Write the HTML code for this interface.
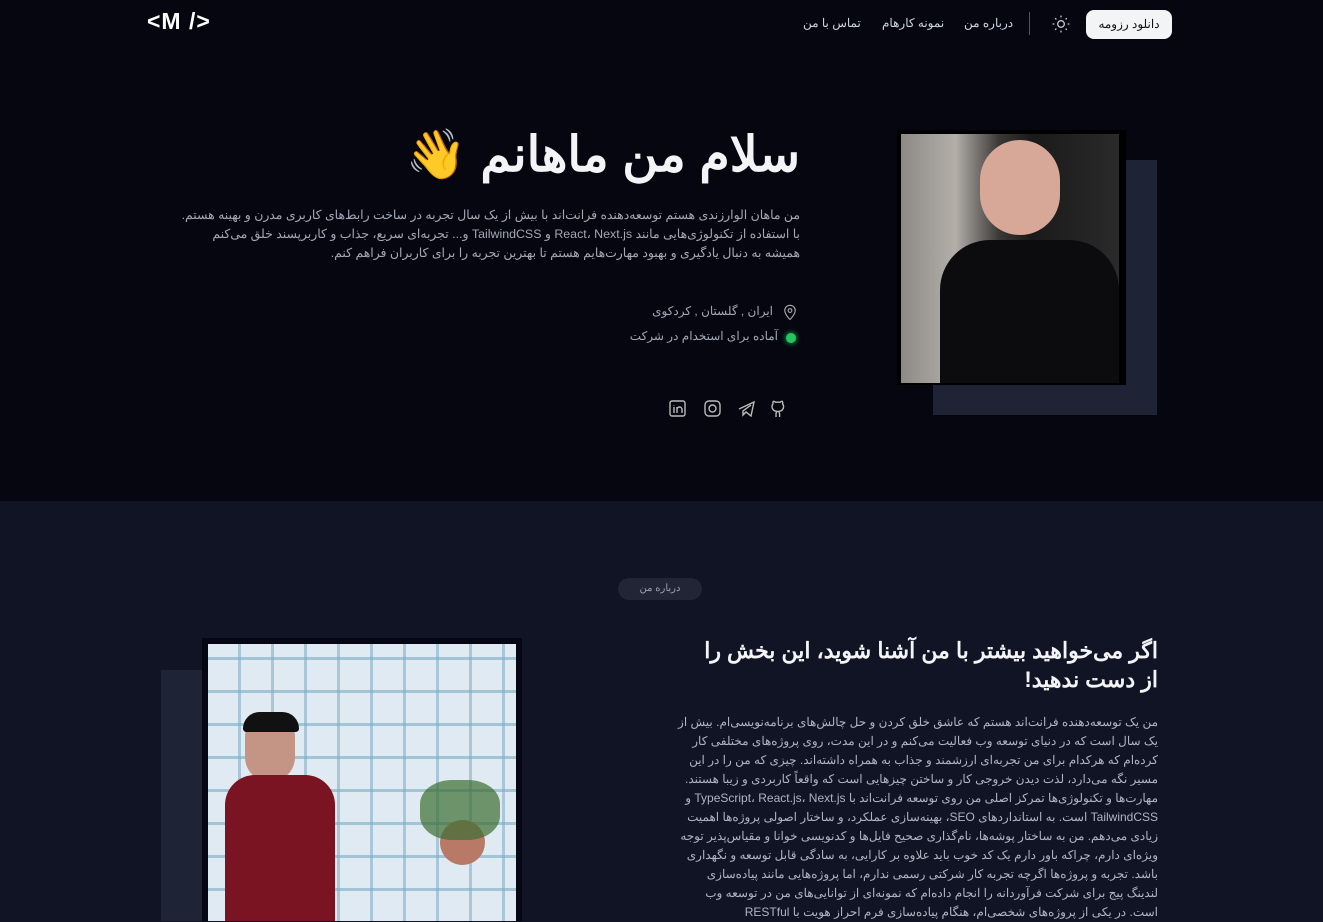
<!DOCTYPE html>
<html lang="fa" dir="rtl"><head><meta charset="utf-8"><style>
*{margin:0;padding:0;box-sizing:border-box}
body{width:1323px;height:921px;overflow:hidden;background:#111425;font-family:"Liberation Sans","Noto Sans CJK SC",sans-serif;color:#e5e7eb;position:relative}
.a{position:absolute}
.top{left:0;top:0;width:1323px;height:501px;background:#05060f}
.nav{font-size:12px;color:#cbd5e1}
.p{font-size:12px;color:#a3a8b6;line-height:19px;text-align:right}
</style></head><body>
<div class="a top"></div>
<div class="a" style="left:147px;top:8px;font-size:23px;font-weight:bold;color:#fff;direction:ltr;letter-spacing:1px">&lt;M /&gt;</div>
<div class="a" style="left:1086px;top:10px;width:86px;height:29px;background:#f3f4f6;border-radius:8px;color:#111;font-size:12px;text-align:center;line-height:29px">دانلود رزومه</div>
<svg class="a" style="left:1051px;top:14px" width="20" height="20" viewBox="0 0 24 24" fill="none" stroke="#cbd5e1" stroke-width="1.5"><circle cx="12" cy="12" r="4"/><path d="M12 2v2M12 20v2M2 12h2M20 12h2M5 5l1.5 1.5M17.5 17.5L19 19M5 19l1.5-1.5M17.5 6.5L19 5"/></svg>
<div class="a" style="left:1029px;top:12px;width:1px;height:23px;background:#555"></div>
<div class="a nav" style="left:964px;top:16px">درباره من</div>
<div class="a nav" style="left:882px;top:16px">نمونه کارهام</div>
<div class="a nav" style="left:803px;top:16px">تماس با من</div>
<div class="a" style="left:380px;top:126px;width:420px;text-align:right;font-size:49px;font-weight:bold;color:#f3f4f6;white-space:nowrap">سلام من ماهانم <span style="font-family:sans-serif">👋</span></div>
<div class="a p" style="left:180px;top:206px;width:620px;font-size:12.4px">من ماهان الوارزندی هستم توسعه‌دهنده فرانت‌اند با بیش از یک سال تجربه در ساخت رابط‌های کاربری مدرن و بهینه هستم.<br>با استفاده از تکنولوژی‌هایی مانند React، Next.js و TailwindCSS و... تجربه‌ای سریع، جذاب و کاربرپسند خلق می‌کنم<br>همیشه به دنبال یادگیری و بهبود مهارت‌هایم هستم تا بهترین تجربه را برای کاربران فراهم کنم.</div>
<svg class="a" style="left:781px;top:302px" width="18" height="20" viewBox="0 0 24 24" fill="none" stroke="#aaa" stroke-width="1.5"><path d="M12 22s-7-7-7-12a7 7 0 0 1 14 0c0 5-7 12-7 12z"/><circle cx="12" cy="10" r="2.5"/></svg>
<div class="a p" style="left:600px;top:302px;width:173px">ایران , گلستان , کردکوی</div>
<div class="a" style="left:786px;top:333px;width:10px;height:10px;border-radius:50%;background:#22c55e;box-shadow:0 0 6px #22c55e"></div>
<div class="a p" style="left:580px;top:327px;width:198px">آماده برای استخدام در شرکت</div>
<svg class="a" style="left:668px;top:399px" width="130" height="20" viewBox="0 0 130 20" fill="none" stroke="#bbb" stroke-width="1.4">
<rect x="2" y="2" width="15" height="15" rx="2"/><path d="M6 8v6M6 6v.5M9 14V8M9 10.5a2.5 2.5 0 0 1 5 0V14"/>
<rect x="37" y="2" width="15" height="15" rx="4"/><circle cx="44.5" cy="9.5" r="3.5"/>
<path d="M71 10l15-7-3 14-5-4-3 3v-4l8-6"/>
<path d="M108 18v-3c0-1 .5-2 1-2.5-3-.5-5-2-5-5 0-1 .5-2 1-2.7-.2-.8 0-2 .3-2.5 1 0 2 .6 2.5 1a8 8 0 0 1 4 0c.5-.4 1.5-1 2.5-1 .3.5.5 1.7.3 2.5.5.7 1 1.7 1 2.7 0 3-2 4.5-5 5 .5.5 1 1.5 1 2.5v3"/></svg>
<div class="a" style="left:933px;top:160px;width:224px;height:255px;background:#1f2336"></div>
<div class="a" style="left:897px;top:130px;width:229px;height:255px;background:#000"></div>
<div class="a" style="left:901px;top:134px;width:218px;height:249px;background:linear-gradient(90deg,#8d8a86 0%,#b3aea8 25%,#3a3836 45%,#1a1a1a 60%,#2a2a2a 100%)"></div>
<div class="a" style="left:980px;top:140px;width:80px;height:95px;border-radius:40px;background:#d7a898"></div>
<div class="a" style="left:940px;top:240px;width:179px;height:143px;border-radius:50px 50px 0 0;background:#0c0c0e"></div>
<div class="a" style="left:618px;top:578px;width:84px;height:22px;background:#212536;border-radius:11px;font-size:10px;color:#9ca3af;text-align:center;line-height:22px">درباره من</div>
<div class="a" style="left:600px;top:636px;width:558px;text-align:right;font-size:22px;font-weight:bold;color:#f3f4f6;line-height:29px">اگر می‌خواهید بیشتر با من آشنا شوید، این بخش را<br>از دست ندهید!</div>
<div class="a p" style="left:676px;top:713px;width:482px;font-size:12px;color:#b0b4c0">من یک توسعه‌دهنده فرانت‌اند هستم که عاشق خلق کردن و حل چالش‌های برنامه‌نویسی‌ام. بیش از یک سال است که در دنیای توسعه وب فعالیت می‌کنم و در این مدت، روی پروژه‌های مختلفی کار کرده‌ام که هرکدام برای من تجربه‌ای ارزشمند و جذاب به همراه داشته‌اند. چیزی که من را در این مسیر نگه می‌دارد، لذت دیدن خروجی کار و ساختن چیزهایی است که واقعاً کاربردی و زیبا هستند. مهارت‌ها و تکنولوژی‌ها تمرکز اصلی من روی توسعه فرانت‌اند با TypeScript، React.js، Next.js و TailwindCSS است. به استانداردهای SEO، بهینه‌سازی عملکرد، و ساختار اصولی پروژه‌ها اهمیت زیادی می‌دهم. من به ساختار پوشه‌ها، نام‌گذاری صحیح فایل‌ها و کدنویسی خوانا و مقیاس‌پذیر توجه ویژه‌ای دارم، چراکه باور دارم یک کد خوب باید علاوه بر کارایی، به سادگی قابل توسعه و نگهداری باشد. تجربه و پروژه‌ها اگرچه تجربه کار شرکتی رسمی ندارم، اما پروژه‌هایی مانند پیاده‌سازی لندینگ پیج برای شرکت فرآوردانه را انجام داده‌ام که نمونه‌ای از توانایی‌های من در توسعه وب است. در یکی از پروژه‌های شخصی‌ام، هنگام پیاده‌سازی فرم احراز هویت با RESTful</div>
<div class="a" style="left:161px;top:670px;width:60px;height:251px;background:#1f2336"></div>
<div class="a" style="left:202px;top:638px;width:320px;height:283px;background:#050814"></div>
<div class="a" style="left:208px;top:644px;width:308px;height:277px;background:repeating-linear-gradient(90deg,#dfeaf2 0 30px,#a9c7d8 30px 33px),#e0ecf3"></div>
<div class="a" style="left:208px;top:644px;width:308px;height:277px;background:repeating-linear-gradient(0deg,transparent 0 30px,rgba(120,170,195,.6) 30px 33px)"></div>
<div class="a" style="left:245px;top:712px;width:50px;height:70px;border-radius:25px;background:#c49584"></div>
<div class="a" style="left:243px;top:712px;width:56px;height:20px;border-radius:20px 20px 4px 4px;background:#111"></div>
<div class="a" style="left:225px;top:775px;width:110px;height:146px;border-radius:30px 30px 0 0;background:#7a1422"></div>
<div class="a" style="left:440px;top:820px;width:45px;height:45px;border-radius:50%;background:#b87a66"></div>
<div class="a" style="left:420px;top:780px;width:80px;height:60px;border-radius:40%;background:rgba(60,110,50,.7)"></div>
</body></html>
